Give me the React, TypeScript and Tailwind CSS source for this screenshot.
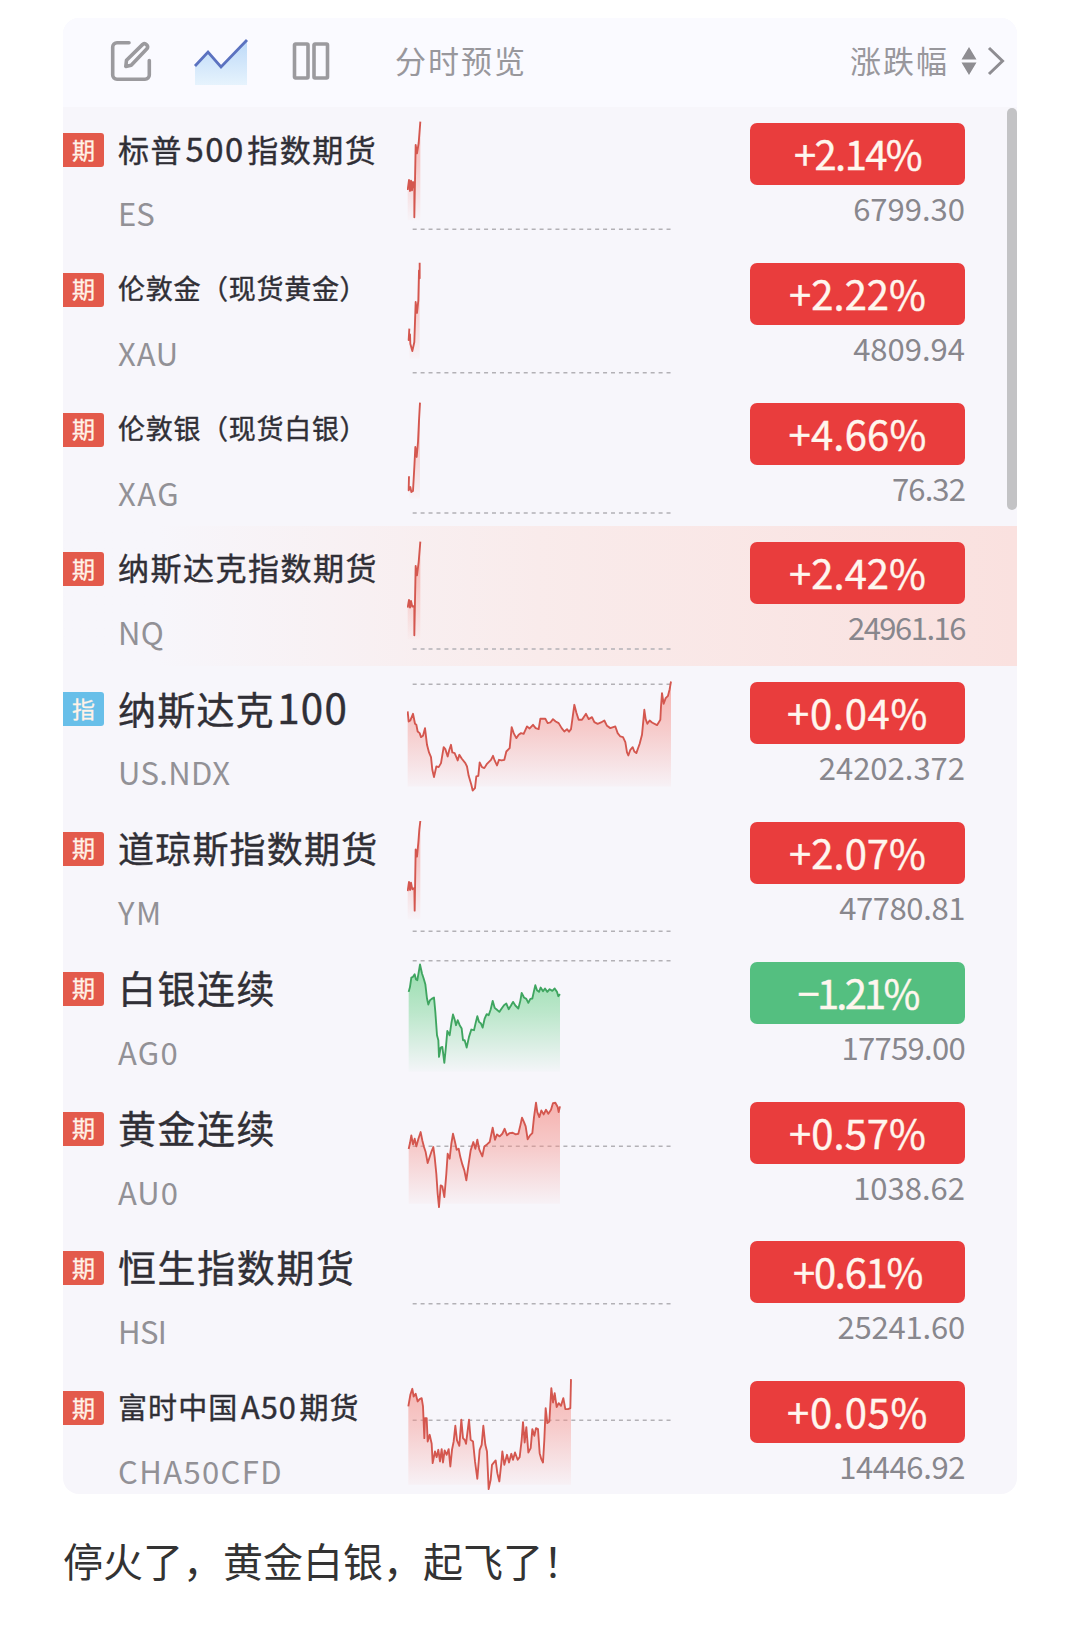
import clsx from "clsx";

type Chart = {
  // points are in thirds of a pixel, shifted vertically into the row
  points?: string;
  shift?: number;
  bottom?: number;
  base: number;
};

type Quote = {
  tag: "期" | "指";
  name: string;
  nameClass: string;
  code: string;
  codeClass?: string;
  change: string;
  changeClass?: string;
  price: string;
  priceClass?: string;
  chart: Chart;
  active?: boolean;
};

const quotes: Quote[] = [
  {
    tag: "期",
    name: "标普500指数期货",
    nameClass: "text-[31px] tracking-[1.5px]",
    code: "ES",
    change: "+2.14%",
    changeClass: "tracking-[-1.6px]",
    price: "6799.30",
    chart: {
      points: "22,249 26,219 29,252 32,221 35,250 38,225 42,244 42,331 46,114 50,139 55,108 60,44",
      bottom: 340,
      base: 367,
    },
  },
  {
    tag: "期",
    name: "伦敦金（现货黄金）",
    nameClass: "text-[27px] tracking-[0.7px]",
    code: "XAU",
    codeClass: "tracking-[0.8px]",
    change: "+2.22%",
    price: "4809.94",
    chart: {
      points: "27,245 25,279 29,262 30,290 36,312 42,285 46,165 50,198 54,160 56,70 58,94 58,47",
      bottom: 335,
      base: 377,
    },
  },
  {
    tag: "期",
    name: "伦敦银（现货白银）",
    nameClass: "text-[27px] tracking-[0.7px]",
    code: "XAG",
    codeClass: "tracking-[1.5px]",
    change: "+4.66%",
    changeClass: "tracking-[0.2px]",
    price: "76.32",
    priceClass: "tracking-[-0.9px]",
    chart: {
      points: "26,268 25,310 30,300 33,315 38,312 42,240 45,180 49,210 53,165 56,100 59,47",
      bottom: 335,
      base: 378,
    },
  },
  {
    tag: "期",
    name: "纳斯达克指数期货",
    nameClass: "text-[31px] tracking-[1.5px]",
    code: "NQ",
    codeClass: "tracking-[0.4px]",
    change: "+2.42%",
    price: "24961.16",
    priceClass: "tracking-[-1.5px]",
    active: true,
    chart: {
      points: "22,245 26,222 29,245 32,225 36,242 42,240 42,328 46,120 50,148 55,108 60,47",
      bottom: 340,
      base: 369,
    },
  },
  {
    tag: "指",
    name: "纳斯达克100",
    nameClass: "text-[38px] tracking-[1.2px]",
    code: "US.NDX",
    codeClass: "tracking-[0.4px]",
    change: "+0.04%",
    changeClass: "tracking-[0.7px]",
    price: "24202.372",
    chart: {
      points:
        "22,125 25,155 30,152 38,132 44,162 48,165 52,185 58,190 62,202 68,198 74,175 80,225 86,248 92,262 96,300 101,322 108,290 115,292 122,280 130,232 135,238 142,260 147,240 152,225 156,248 163,250 172,272 177,255 184,266 195,280 200,290 205,318 213,345 217,362 224,355 228,320 234,318 238,278 245,292 252,295 260,282 272,270 278,258 283,272 290,287 296,270 304,272 312,270 318,245 328,235 334,172 340,190 348,205 355,195 362,190 370,192 380,170 388,176 398,165 406,175 415,178 420,147 435,147 442,160 450,158 458,148 466,155 475,160 484,175 492,185 500,178 506,186 512,178 522,105 528,128 535,150 545,150 557,132 565,148 575,142 582,157 592,162 602,158 612,152 620,168 630,175 645,170 652,190 660,200 668,202 675,217 680,248 684,257 690,240 697,232 702,245 708,250 718,222 725,195 732,120 736,148 741,162 748,152 755,158 770,166 780,150 782,110 785,70 790,102 796,85 803,78 808,58 812,35",
      shift: 11.4,
      bottom: 350,
      base: 55,
    },
  },
  {
    tag: "期",
    name: "道琼斯指数期货",
    nameClass: "text-[36px] tracking-[1.2px]",
    code: "YM",
    codeClass: "tracking-[1.5px]",
    change: "+2.07%",
    price: "47780.81",
    priceClass: "tracking-[-0.4px]",
    chart: {
      points: "22,255 26,228 29,252 32,230 36,250 42,246 43,314 46,130 50,152 54,110 57,70 60,45",
      bottom: 340,
      base: 376,
    },
  },
  {
    tag: "期",
    name: "白银连续",
    nameClass: "text-[38px] tracking-[1.5px]",
    code: "AG0",
    codeClass: "tracking-[1.3px]",
    change: "-1.21%",
    changeClass: "tracking-[-2.8px]",
    price: "17759.00",
    priceClass: "tracking-[-0.7px]",
    chart: {
      points:
        "25,155 29,140 33,112 38,110 43,102 47,118 51,120 59,73 65,100 70,115 75,132 80,175 84,193 89,180 94,176 101,172 105,215 110,285 114,300 116,350 121,322 126,320 132,368 137,318 141,272 148,285 153,250 158,223 163,238 167,255 172,240 178,255 184,265 188,300 193,300 199,322 206,290 213,268 221,270 226,248 231,228 236,245 242,250 247,262 253,235 259,222 265,225 271,208 277,182 283,203 289,208 297,215 304,205 311,195 318,190 325,207 332,196 338,185 345,196 354,205 360,182 364,158 371,172 378,176 384,188 390,176 396,175 401,152 405,135 410,150 416,155 421,142 428,153 434,145 441,155 448,147 456,152 463,145 470,155 474,168 479,162",
      shift: -17.4,
      bottom: 395,
      base: 44,
    },
  },
  {
    tag: "期",
    name: "黄金连续",
    nameClass: "text-[38px] tracking-[1.5px]",
    code: "AU0",
    codeClass: "tracking-[1px]",
    change: "+0.57%",
    price: "1038.62",
    chart: {
      points:
        "25,626 29,608 33,585 38,612 43,595 48,618 54,596 61,575 66,600 71,620 76,635 82,668 88,650 94,632 99,620 103,650 108,700 112,760 116,800 121,735 126,738 132,770 138,700 142,640 148,655 153,610 158,580 164,605 169,628 175,625 180,650 186,672 192,690 198,720 205,670 211,630 219,605 225,625 231,598 237,628 246,648 252,618 260,612 268,605 277,562 284,598 290,582 298,588 306,580 313,565 320,585 328,578 337,577 346,582 354,580 360,555 365,532 371,545 376,558 382,597 389,585 396,578 401,530 407,487 411,515 417,530 423,510 430,522 437,508 444,520 452,508 458,488 465,487 472,500 475,515 479,498",
      shift: -436.8,
      bottom: 790,
      base: 181,
    },
  },
  {
    tag: "期",
    name: "恒生指数期货",
    nameClass: "text-[38px] tracking-[1.6px]",
    code: "HSI",
    codeClass: "tracking-[-0.6px]",
    change: "+0.61%",
    changeClass: "tracking-[-1.3px]",
    price: "25241.60",
    priceClass: "tracking-[-0.2px]",
    chart: { base: 236 },
  },
  {
    tag: "期",
    name: "富时中国A50期货",
    nameClass: "text-[29px] tracking-[1.1px]",
    code: "CHA50CFD",
    codeClass: "tracking-[1.4px]",
    change: "+0.05%",
    changeClass: "tracking-[0.7px]",
    price: "14446.92",
    priceClass: "tracking-[-0.4px]",
    chart: {
      points:
        "24,110 30,75 36,57 40,80 46,72 52,95 58,88 64,85 68,110 72,205 74,145 79,145 82,215 88,195 94,222 97,280 104,245 109,262 114,240 119,275 124,238 128,278 133,242 139,255 145,238 150,290 155,240 160,215 165,168 170,212 177,228 183,150 188,205 194,212 197,222 206,150 211,210 218,215 224,275 231,327 238,240 244,225 249,168 255,225 260,245 265,358 271,330 275,285 281,278 286,272 291,310 297,335 303,280 306,245 312,285 320,255 326,278 333,252 338,270 344,248 352,270 358,262 364,210 368,157 373,218 378,172 384,248 391,235 396,178 402,198 407,175 413,178 418,250 423,268 428,278 432,210 436,115 441,160 447,155 453,55 458,98 463,70 469,112 475,100 482,108 489,85 495,118 503,118 510,115 512,28",
      shift: 14.4,
      bottom: 345,
      base: 166,
    },
  },
];

function Sparkline({ chart, id, down }: { chart: Chart; id: string; down: boolean }) {
  const { points, shift = 0, bottom = 0, base } = chart;
  const color = down ? "#3fa560" : "#d4574f";
  const fill = down ? "#63d083" : "#f58d85";
  const list = points ? points.split(" ") : [];
  const first = list[0]?.split(",")[0];
  const last = list[list.length - 1]?.split(",")[0];

  return (
    <svg viewBox="20 0 801 420" className="h-[140px] w-[267px] shrink-0" fill="none">
      <defs>
        <linearGradient id={id} x1="0" y1="0" x2="0" y2="1">
          <stop offset="0" stopColor={fill} stopOpacity="0.65" />
          <stop offset="0.45" stopColor={fill} stopOpacity="0.4" />
          <stop offset="1" stopColor={fill} stopOpacity="0.02" />
        </linearGradient>
      </defs>
      <line x1="37" x2="814" y1={base} y2={base} stroke="#b3b1b6" strokeWidth="4.5" strokeDasharray="12 11.8" />
      {points && (
        <g transform={`translate(0 ${shift})`}>
          <polygon points={`${first},${bottom} ${points} ${last},${bottom}`} fill={`url(#${id})`} />
          <polyline points={points} stroke={color} strokeWidth="5.6" strokeLinejoin="round" />
        </g>
      )}
    </svg>
  );
}

function Header() {
  return (
    <header className="flex h-[89px] items-center bg-[#fafaff] pb-1 pl-[46px] pr-3 text-[31px] tracking-[2px] text-[#98979c]">
      <svg viewBox="0 0 44 44" className="size-11" fill="none" stroke="#9b9a9e" strokeWidth="3.6" strokeLinecap="round">
        <path d="M20 3.7H8a4.3 4.3 0 0 0-4.3 4.3v28a4.3 4.3 0 0 0 4.3 4.3h28a4.3 4.3 0 0 0 4.3-4.3V21.5" />
        <path d="M17.5 21.2 33.7 5.4c2.6-2 6.4 1.6 4.2 4.4L22.2 26.2l-5.4 1.2z" strokeLinejoin="round" />
      </svg>
      <svg viewBox="0 0 56 52" className="ml-10 h-[52px] w-14" fill="none">
        <defs>
          <linearGradient id="trend" x1="0" y1="0" x2="0" y2="1">
            <stop offset="0" stopColor="#bcd9f8" />
            <stop offset="1" stopColor="#e6f3fd" />
          </linearGradient>
        </defs>
        <path d="M2 31 15 16 28 32 54 5V50H2z" fill="url(#trend)" />
        <path d="M2 31 15 17 28 32 54 5" stroke="#5b72c0" strokeWidth="2.8" />
      </svg>
      <svg viewBox="0 0 38 38" className="ml-[43px] size-[38px]" fill="none" stroke="#9b9a9e" strokeWidth="3.6">
        <rect x="2.5" y="2" width="13.5" height="34" rx="1" />
        <rect x="22" y="2" width="13.5" height="34" rx="1" />
      </svg>
      <span className="ml-[65px]">分时预览</span>
      <span className="ml-auto">涨跌幅</span>
      <svg viewBox="0 0 16 30" className="ml-3 h-[30px] w-4" fill="#8e8d92">
        <path d="M8 1 15.5 13.5H.5zM8 29 15.5 16.5H.5z" />
      </svg>
      <svg viewBox="0 0 18 30" className="ml-2.5 h-[30px] w-[18px]" fill="none" stroke="#8e8d92" strokeWidth="3">
        <path d="M2 2 15.5 15 2 28" />
      </svg>
    </header>
  );
}

function QuoteName({ quote }: { quote: Quote }) {
  // latin letters and digits sit slightly larger and looser than the Chinese text
  const parts = quote.name.split(/([A-Z0-9]+)/).filter(Boolean);

  return (
    <div
      className={clsx(
        "mt-[11px] h-[60px] leading-[60px] text-[#302f36] [-webkit-text-stroke:0.4px_#302f36]",
        quote.nameClass
      )}
    >
      {parts.map((part) =>
        /[A-Z0-9]/.test(part) ? (
          <span key={part} className="mx-[2.5px] text-[1.06em]">
            {part}
          </span>
        ) : (
          part
        )
      )}
    </div>
  );
}

function QuoteRow({ quote, index }: { quote: Quote; index: number }) {
  const down = quote.change.startsWith("-");

  return (
    <li
      className={clsx(
        "flex h-[139.8px] shrink-0",
        quote.active && "bg-linear-to-r from-[#f7f6fb] from-10% via-[#f9ebeb] via-50% to-[#fae1df]"
      )}
    >
      <span
        className={clsx(
          "mt-[26px] flex h-[34px] w-[41px] shrink-0 items-center justify-center rounded-r-[3px] pb-0.5 text-[23px] leading-none text-[#fff3e8] [-webkit-text-stroke:0.3px_#fff3e8]",
          quote.tag === "期" ? "bg-[#e35a4b]" : "bg-[#68bfe9]"
        )}
      >
        {quote.tag}
      </span>
      <div className="ml-3.5 w-[227px] shrink-0 grow whitespace-nowrap">
        <QuoteName quote={quote} />
        <div className={clsx("mt-[15px] text-[31px] leading-[40px] text-[#929196]", quote.codeClass)}>
          {quote.code}
        </div>
      </div>
      <Sparkline chart={quote.chart} id={`fill-${index}`} down={down} />
      <div className="ml-[76px] mr-[52px] w-[215px] shrink-0">
        <div
          className={clsx(
            "mt-4 h-[62px] rounded-[7px] text-center text-[40px] leading-[60px] text-[#fff6ee] [-webkit-text-stroke:0.4px_#fff6ee]",
            down ? "bg-[#54bf80]" : "bg-[#e93d3d]",
            quote.changeClass
          )}
        >
          {quote.change.replace("-", "−")}
        </div>
        <div className={clsx("mt-[3px] text-right text-[31px] leading-[40px] text-[#88878d]", quote.priceClass)}>
          {quote.price}
        </div>
      </div>
    </li>
  );
}

export default function App() {
  return (
    <main className="h-[1651px] w-[1080px] overflow-hidden bg-white pt-[18px] font-['Noto_Sans_CJK_SC',sans-serif]">
      <section className="relative mx-[63px] h-[1476px] overflow-hidden rounded-2xl bg-[#f7f6fb]">
        <Header />
        <ul className="flex flex-col">
          {quotes.map((quote, index) => (
            <QuoteRow key={quote.code} quote={quote} index={index} />
          ))}
        </ul>
        {/* Scrollbar thumb */}
        <div className="absolute right-0 top-[90px] h-[402px] w-2.5 rounded-[5px] bg-[#c3c3c5]" />
      </section>
      <p className="ml-[63px] mt-9 text-[40px] leading-[60px] text-[#333333]">停火了，黄金白银，起飞了！</p>
    </main>
  );
}
